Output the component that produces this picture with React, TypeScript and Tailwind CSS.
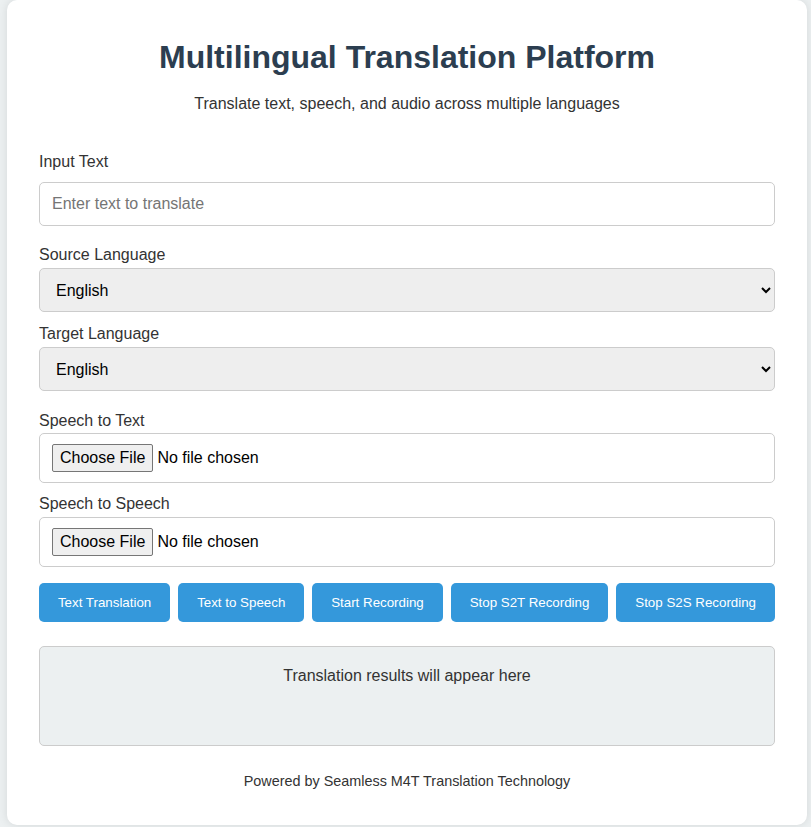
export default function App() {
  const buttons = ['Text Translation', 'Text to Speech', 'Start Recording', 'Stop S2T Recording', 'Stop S2S Recording']
  const languages = ['English', 'Spanish', 'French', 'German', 'Hindi', 'Chinese']

  return (
    <div className="min-h-screen bg-[#ecf0f1] font-['Liberation_Sans',Arial,sans-serif] text-[#333]">
      <div className="ml-[7px] w-[800px] rounded-[10px] bg-white px-8 pt-[38px] pb-[36px] shadow-[0_0_10px_rgba(0,0,0,0.1)]">
        <h1 className="text-center text-[32px] leading-[38px] font-bold text-[#2c3e50]">
          Multilingual Translation Platform
        </h1>
        <p className="mt-[19px] text-center text-[16px] leading-[18px]">
          Translate text, speech, and audio across multiple languages
        </p>

        <label className="mt-[40px] block text-[16px] leading-[18px]">Input Text</label>
        <input
          type="text"
          placeholder="Enter text to translate"
          className="mt-[11px] block h-[44px] w-full rounded-[5px] border border-[#ccc] bg-white px-3 text-[16px] placeholder:text-[#757575]"
        />

        <label className="mt-[20px] block text-[16px] leading-[18px]">Source Language</label>
        <select className="mt-[4px] block h-[44px] w-full rounded-[5px] border border-[#ccc] bg-[#eeeeee] px-3 text-[16px] text-black">
          {languages.map((l) => (
            <option key={l}>{l}</option>
          ))}
        </select>

        <label className="mt-[13px] block text-[16px] leading-[18px]">Target Language</label>
        <select className="mt-[4px] block h-[44px] w-full rounded-[5px] border border-[#ccc] bg-[#eeeeee] px-3 text-[16px] text-black">
          {languages.map((l) => (
            <option key={l}>{l}</option>
          ))}
        </select>

        <label className="mt-[21px] block text-[16px] leading-[18px]">Speech to Text</label>
        <div className="mt-[3px] flex h-[50px] items-center rounded-[5px] border border-[#ccc] px-3">
          <input
            type="file"
            className="text-[16px] text-black file:mr-[4px] file:rounded-[2px] file:border file:border-[#767676] file:bg-[#efefef] file:px-[7px] file:py-[1px] file:text-black"
          />
        </div>

        <label className="mt-[12px] block text-[16px] leading-[18px]">Speech to Speech</label>
        <div className="mt-[4px] flex h-[50px] items-center rounded-[5px] border border-[#ccc] px-3">
          <input
            type="file"
            className="text-[16px] text-black file:mr-[4px] file:rounded-[2px] file:border file:border-[#767676] file:bg-[#efefef] file:px-[7px] file:py-[1px] file:text-black"
          />
        </div>

        <div className="mt-[16px] flex gap-2">
          {buttons.map((b) => (
            <button
              key={b}
              className="h-[39px] grow whitespace-nowrap rounded-[5px] bg-[#3498db] px-[15px] text-[13.33px] text-white"
            >
              {b}
            </button>
          ))}
        </div>

        <div className="mt-[24px] min-h-[100px] rounded-[5px] border border-[#ccc] bg-[#ecf0f1] p-5 text-center text-[16px] leading-[18px]">
          Translation results will appear here
        </div>

        <p className="mt-[27px] text-center text-[14.4px] leading-[16px]">
          Powered by Seamless M4T Translation Technology
        </p>
      </div>
    </div>
  )
}
